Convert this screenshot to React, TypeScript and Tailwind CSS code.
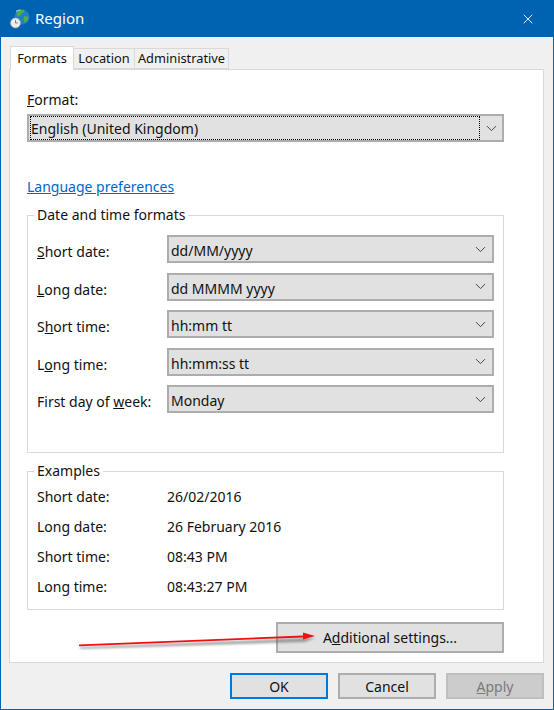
import { ChevronDown, X } from "lucide-react";
import type { ReactNode } from "react";

const font = "font-['Noto_Sans',sans-serif]";

const selects = [
  { pre: "", key: "S", post: "hort date:", value: "dd/MM/yyyy" },
  { pre: "", key: "L", post: "ong date:", value: "dd MMMM yyyy" },
  { pre: "S", key: "h", post: "ort time:", value: "hh:mm tt" },
  { pre: "L", key: "o", post: "ng time:", value: "hh:mm:ss tt" },
  { pre: "First day of ", key: "w", post: "eek:", value: "Monday" },
];

const examples = [
  ["Short date:", "26/02/2016"],
  ["Long date:", "26 February 2016"],
  ["Short time:", "08:43 PM"],
  ["Long time:", "08:43:27 PM"],
];

function Combo({ children, arrowWidth }: { children: ReactNode; arrowWidth: string }) {
  return (
    <div className="flex h-[28px] items-center justify-between border-2 border-[#adadad] bg-[#e1e1e1]">
      {children}
      <div className={`flex ${arrowWidth} justify-center text-[#444]`}>
        <ChevronDown size={17} strokeWidth={1.4} />
      </div>
    </div>
  );
}

function WinButton({ label, className }: { label: ReactNode; className: string }) {
  return (
    <button className={`flex h-[26px] w-[98px] items-center justify-center border-2 text-[14px] ${className}`}>
      {label}
    </button>
  );
}

function Legend({ children }: { children: string }) {
  return <legend className="-ml-[3px] px-[3px] pb-[2px] text-[14px] leading-[15px]">{children}</legend>;
}

function GlobeIcon() {
  return (
    <svg width="20" height="20" viewBox="0 0 20 20">
      <circle cx="12" cy="8" r="7.5" fill="#1f7fc8" />
      <path d="M7 3c2-2 5-2.5 7-2 1 2-1 3-2.5 3.500-.5 2-2 1.500-2.500 3-1.500 0-3-1-2-4.500zM14 7.500c1.500-.5 3.500 0 4.500 1-.5 3-2 4.500-4 5-1-2-1.500-4-.5-6z" fill="#4fae3f" />
      <path d="M6 2.500c1.500-1 3-1.500 4.500-1.500" fill="none" stroke="#bfe3f7" strokeWidth="1" />
      <circle cx="5.500" cy="14" r="5" fill="#ececec" stroke="#a8a8a8" strokeWidth="0.7" />
      <path d="M5.500 11v3h2.200" fill="none" stroke="#666" strokeWidth="0.8" />
    </svg>
  );
}

export default function App() {
  return (
    <div className={`relative flex h-[710px] w-[554px] flex-col border-x border-b border-[#0063b1] bg-[#f0f0f0] text-[14px] text-[#111] ${font}`}>
      <div className="flex h-[37px] shrink-0 items-center justify-between bg-[#0063b1] pl-[9px] pr-[17px] text-white">
        <div className="flex items-center gap-[5px]">
          <GlobeIcon />
          <span className="text-[15px]">Region</span>
        </div>
        <X size={16} strokeWidth={1.3} />
      </div>

      <div className="flex flex-1 flex-col pl-[8px] pr-[9px]">
        <div className="flex h-[32px] shrink-0 items-end pl-px">
          <div className="relative z-10 -mb-px flex h-[24px] w-[64px] items-center justify-center border border-b-0 border-[#d9d9d9] bg-white text-[12.8px]">
            Formats
          </div>
          <div className="flex h-[21px] w-[61px] items-center justify-center border-y border-r border-[#d9d9d9] bg-[#f0f0f0] text-[12.8px]">
            Location
          </div>
          <div className="flex h-[21px] w-[94px] items-center justify-center border-y border-r border-[#d9d9d9] bg-[#f0f0f0] text-[12.8px]">
            Administrative
          </div>
        </div>

        <div className="flex h-[594px] shrink-0 flex-col border border-[#d9d9d9] bg-white pl-[17px] pr-[39px] pt-[20px]">
          <div className="h-[24px] leading-[20px]">
            <u>F</u>ormat:
          </div>
          <Combo arrowWidth="w-[22px]">
            <div className="ml-px flex h-[24px] flex-1 items-center border border-dotted border-black">
              English (United Kingdom)
            </div>
          </Combo>

          <div className="mt-[34px] h-[22px] leading-[22px] text-[#0066cc] underline">Language preferences</div>

          <fieldset className="mt-[9px] h-[246px] border border-[#d9d9d9] pl-[9px] pr-[9px]">
            <Legend>Date and time formats</Legend>
            <div className="mt-[11px] flex flex-col gap-[9.5px]">
              {selects.map((s) => (
                <div key={s.value} className="flex items-center">
                  <div className="w-[130px] pt-[5px]">
                    {s.pre}
                    <u>{s.key}</u>
                    {s.post}
                  </div>
                  <div className="flex-1">
                    <Combo arrowWidth="w-[24px]">
                      <span className="pl-[2px] pt-[3px]">{s.value}</span>
                    </Combo>
                  </div>
                </div>
              ))}
            </div>
          </fieldset>

          <fieldset className="mt-[10px] h-[147px] border border-[#d9d9d9] pl-[9px]">
            <Legend>Examples</Legend>
            <div className="mt-px flex flex-col">
              {examples.map(([label, value]) => (
                <div key={label} className="flex h-[30px] items-center">
                  <div className="w-[130px]">{label}</div>
                  <div>{value}</div>
                </div>
              ))}
            </div>
          </fieldset>

          <div className="mt-[12px] flex justify-end">
            <button className="flex h-[31px] w-[228px] items-center justify-center border-2 border-[#adadad] bg-[#e1e1e1] text-[14px]">
              <span>
                A<u>d</u>ditional settings...
              </span>
            </button>
          </div>
        </div>

        <div className="flex flex-1 items-start justify-end gap-[10px] pt-[10px]">
          <WinButton label="OK" className="border-[#0078d7] bg-[#e1e1e1]" />
          <WinButton label="Cancel" className="border-[#adadad] bg-[#e1e1e1]" />
          <WinButton label={<span><u>A</u>pply</span>} className="border-[#bfbfbf] bg-[#cccccc] text-[#7a7a7a]" />
        </div>
      </div>

      {/* annotation arrow over the dialog */}
      <svg className="pointer-events-none absolute left-0 top-0" width="554" height="710" viewBox="0 0 554 710">
        <defs>
          <filter id="arrow-shadow" x="-5%" y="-50%" width="110%" height="200%">
            <feGaussianBlur stdDeviation="1" />
          </filter>
        </defs>
        <path d="M79 647L306 638L314 638L304 642L79 649z" fill="#555" opacity="0.5" filter="url(#arrow-shadow)" />
        <path d="M78 644.500L302 635.600V632.500L314 636L302 639.500V637.400L78 646.200z" fill="#f01010" />
      </svg>
    </div>
  );
}
